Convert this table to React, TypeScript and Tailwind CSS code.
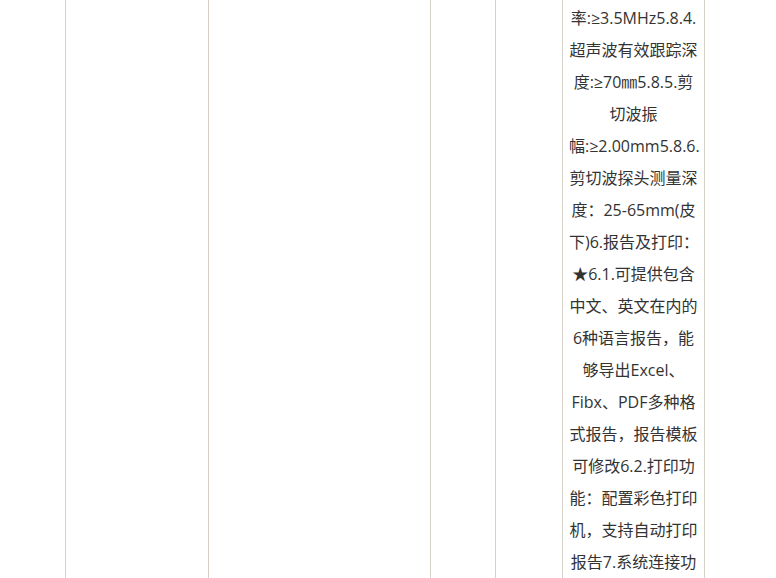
import React from 'react';

const lines = [
  '率:≥3.5MHz5.8.4.',
  '超声波有效跟踪深',
  '度:≥70㎜5.8.5.剪',
  '切波振',
  '幅:≥2.00mm5.8.6.',
  '剪切波探头测量深',
  '度：25-65mm(皮',
  '下)6.报告及打印：',
  '★6.1.可提供包含',
  '中文、英文在内的',
  '6种语言报告，能',
  '够导出Excel、',
  'Fibx、PDF多种格',
  '式报告，报告模板',
  '可修改6.2.打印功',
  '能：配置彩色打印',
  '机，支持自动打印',
  '报告7.系统连接功',
];

export default function App() {
  return (
    <div
      className="flex h-[578px] w-full overflow-hidden bg-white text-[#333333]"
      style={{ fontFamily: '"Open Sans", "Noto Sans CJK SC", sans-serif' }}
    >
      <div className="w-[65px] shrink-0" />
      <div className="w-[143px] shrink-0 border-l border-[#d6d2ca]" />
      <div className="w-[222px] shrink-0 border-l border-[#d8ccc6]" />
      <div className="w-[65px] shrink-0 border-l border-[#d6d2ca]" />
      <div className="w-[67px] shrink-0 border-l border-[#d6d2ca]" />
      <div className="w-[142px] shrink-0 border-l border-[#d6d2ca] px-[6px] pt-[2px] text-center text-[16px] leading-[32px]">
        {lines.map((l, i) => (
          <div key={i} className="whitespace-nowrap">{l}</div>
        ))}
      </div>
      <div className="flex-1 border-l border-[#d6d2ca]" />
    </div>
  );
}
